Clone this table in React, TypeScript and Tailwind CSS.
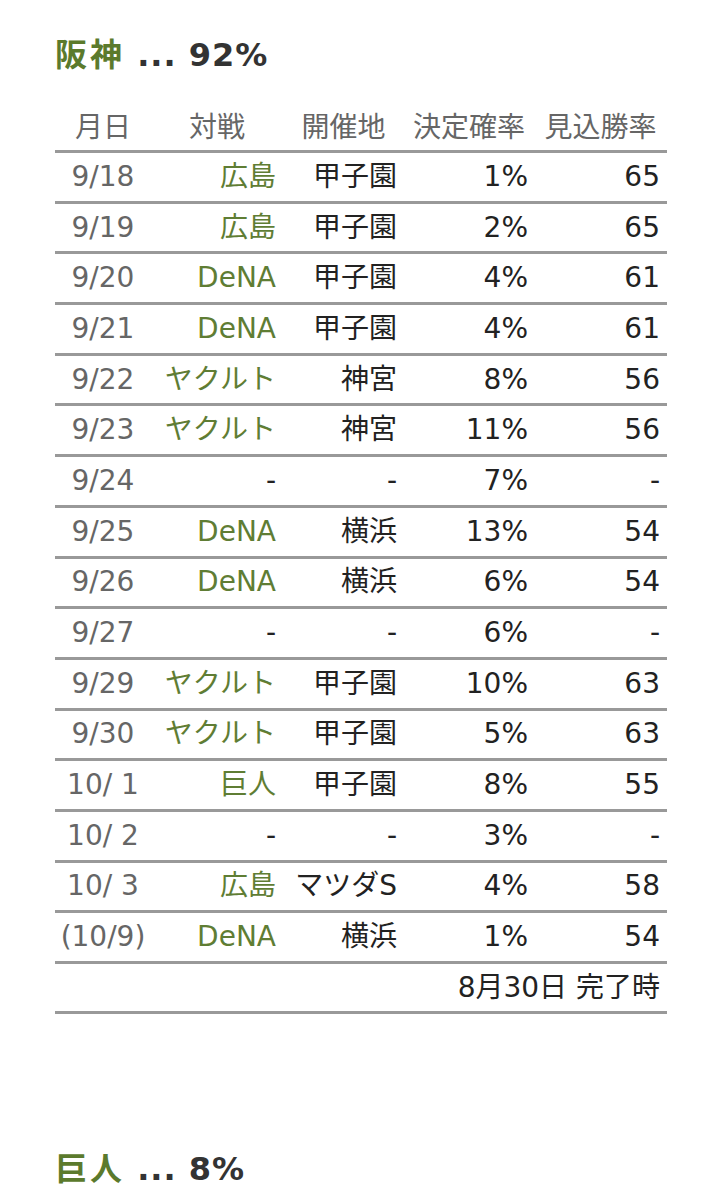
const rows: [string, string, string, string, string][] = [
  ['9/18', '広島', '甲子園', '1%', '65'],
  ['9/19', '広島', '甲子園', '2%', '65'],
  ['9/20', 'DeNA', '甲子園', '4%', '61'],
  ['9/21', 'DeNA', '甲子園', '4%', '61'],
  ['9/22', 'ヤクルト', '神宮', '8%', '56'],
  ['9/23', 'ヤクルト', '神宮', '11%', '56'],
  ['9/24', '-', '-', '7%', '-'],
  ['9/25', 'DeNA', '横浜', '13%', '54'],
  ['9/26', 'DeNA', '横浜', '6%', '54'],
  ['9/27', '-', '-', '6%', '-'],
  ['9/29', 'ヤクルト', '甲子園', '10%', '63'],
  ['9/30', 'ヤクルト', '甲子園', '5%', '63'],
  ['10/ 1', '巨人', '甲子園', '8%', '55'],
  ['10/ 2', '-', '-', '3%', '-'],
  ['10/ 3', '広島', 'マツダS', '4%', '58'],
  ['(10/9)', 'DeNA', '横浜', '1%', '54'],
]

const HEADERS = ['月日', '対戦', '開催地', '決定確率', '見込勝率']

const cols = 'grid grid-cols-[96px_132px_121px_130px_133px]'

function Title({ team, pct }: { team: string; pct: string }) {
  return (
    <h2 className="h-[40px] leading-[40px] text-[32px] font-bold whitespace-pre">
      <span className="text-[#5b7a2c] tracking-[3px]">{team}</span>
      <span className="text-[#333] tracking-[1px]"> ... {pct}</span>
    </h2>
  )
}

export default function App() {
  return (
    <div
      className="bg-white min-h-[1200px] pl-[55px] pr-[43px] pt-[35px] whitespace-pre"
      style={{ fontFamily: '"DejaVu Sans", "Noto Sans CJK JP", sans-serif' }}
    >
      <Title team="阪神" pct="92%" />

      {/* Table */}
      <div className="mt-[30px] text-[28px]">
        <div className={`${cols} h-[48px] items-center border-b-[3px] border-[#999] text-[#666]`}>
          {HEADERS.map((h) => (
            <div key={h} className="text-center">
              {h}
            </div>
          ))}
        </div>

        {rows.map(([date, team, place, prob, win]) => (
          <div
            key={date}
            className={`${cols} h-[50.7px] items-center border-b-[3px] border-[#999]`}
          >
            <div className="text-center text-[#666]">{date}</div>
            <div className={`text-right pr-[7px] ${team === '-' ? 'text-[#222]' : 'text-[#5f7d34]'}`}>
              {team}
            </div>
            <div className="text-right pr-[7px] text-[#222]">{place}</div>
            <div className="text-right pr-[6px] text-[#222]">{prob}</div>
            <div className="text-right pr-[7px] text-[#222]">{win}</div>
          </div>
        ))}

        <div className="h-[50px] flex items-center justify-end pr-[7px] border-b-[3px] border-[#999] text-[#222]">
          8月30日 完了時
        </div>
      </div>

      <div className="mt-[135px]">
        <Title team="巨人" pct="8%" />
      </div>
    </div>
  )
}
